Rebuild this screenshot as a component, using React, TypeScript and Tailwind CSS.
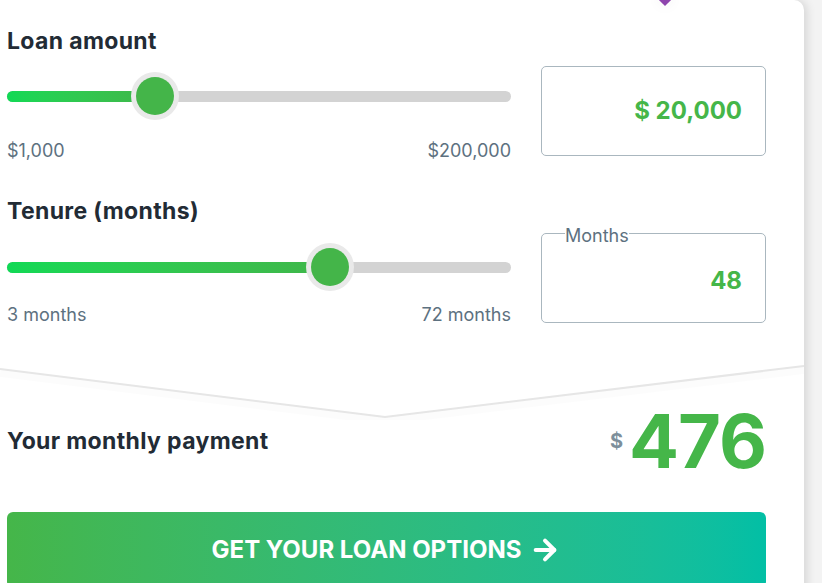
import { ArrowRight } from 'lucide-react';

type SliderProps = {
  pct: number;
};

function Slider({ pct }: SliderProps) {
  return (
    <div className="relative h-[11px] w-full rounded-full bg-[#d3d3d3]">
      <div
        className="h-full rounded-full bg-gradient-to-r from-[#10d955] to-[#3fb64a]"
        style={{ width: `${pct}%` }}
      />
      <div
        className="absolute top-1/2 h-[48px] w-[48px] -translate-x-1/2 -translate-y-1/2 rounded-full bg-[#e9e9e9] p-[5px]"
        style={{ left: `${pct}%` }}
      >
        <div className="h-full w-full rounded-full bg-[#44b549]" />
      </div>
    </div>
  );
}

export default function App() {
  return (
    <div className="min-h-[583px] w-[822px] overflow-hidden bg-[#f3f3f3] font-['Inter',sans-serif]">
      <div className="relative w-[804px] rounded-tr-[10px] bg-white pb-16 shadow-[3px_0_10px_rgba(0,0,0,0.12)]">
        {/* pointer from the tab above */}
        <div className="absolute left-[660px] top-[-6px] h-[10px] w-[10px] rotate-45 bg-[#8e44ad] shadow-[0_0_14px_rgba(0,0,0,0.08)]" />

        <div className="pl-[7px] pr-[38px] pt-[27px]">
          <h2 className="text-[23px] font-bold leading-7 tracking-[0.35px] text-[#222b35]">Loan amount</h2>
          <div className="mt-[11px] flex gap-[30px]">
            <div className="w-[504px]">
              <div className="flex h-[60px] items-center">
                <Slider pct={29.4} />
              </div>
              <div className="mt-[13px] flex justify-between text-[18px] leading-6 text-[#5d7180]">
                <span>$1,000</span>
                <span>$200,000</span>
              </div>
            </div>
            <div className="flex h-[90px] w-[225px] items-center justify-end rounded-[5px] border border-[#aab7bf] pr-[23px] text-[24px] font-bold text-[#45b649]">
              $ 20,000
            </div>
          </div>

          <h2 className="mt-[34px] text-[23px] font-bold leading-7 tracking-[0.35px] text-[#222b35]">Tenure (months)</h2>
          <div className="mt-2 flex gap-[30px]">
            <div className="w-[504px]">
              <div className="flex h-[68px] items-center">
                <Slider pct={64.1} />
              </div>
              <div className="mt-[2px] flex justify-between text-[18px] leading-6 text-[#5d7180]">
                <span>3 months</span>
                <span>72 months</span>
              </div>
            </div>
            <div className="relative flex h-[90px] w-[225px] items-center justify-end rounded-[5px] border border-[#aab7bf] pr-[23px] pt-[6px] text-[24px] font-bold text-[#45b649]">
              <span className="absolute left-[23px] top-[-7px] bg-white text-[18px] font-normal leading-none text-[#5d7180]">
                Months
              </span>
              48
            </div>
          </div>
        </div>

        <svg className="mt-[33px] block h-[60px] w-[804px]" viewBox="0 0 804 60">
          <polyline points="0,13 385,61 804,10" fill="none" stroke="rgba(0,0,0,0.012)" strokeWidth="8" />
          <polyline points="0,9 385,57 804,6" fill="none" stroke="#e6e6e6" strokeWidth="2" />
        </svg>

        <div className="-mt-[19px] flex h-[80px] items-center justify-between pl-[7px] pr-[38px]">
          <span className="text-[23px] font-bold tracking-[0.35px] text-[#222b35]">Your monthly payment</span>
          <div className="flex items-center gap-[6px]">
            <span className="text-[20px] font-bold text-[#7d8f9b]">$</span>
            <span className="text-[74px] font-bold leading-none tracking-[-1px] text-[#45b649]">476</span>
          </div>
        </div>

        <div className="mt-[31px] pl-[7px] pr-[38px]">
          <button className="flex h-[76px] w-full items-center justify-center gap-2 rounded-[6px] bg-gradient-to-r from-[#45b649] to-[#02bfa5] text-[24px] font-bold text-white">
            GET YOUR LOAN OPTIONS
            <ArrowRight size={32} strokeWidth={3} />
          </button>
        </div>
      </div>
    </div>
  );
}
